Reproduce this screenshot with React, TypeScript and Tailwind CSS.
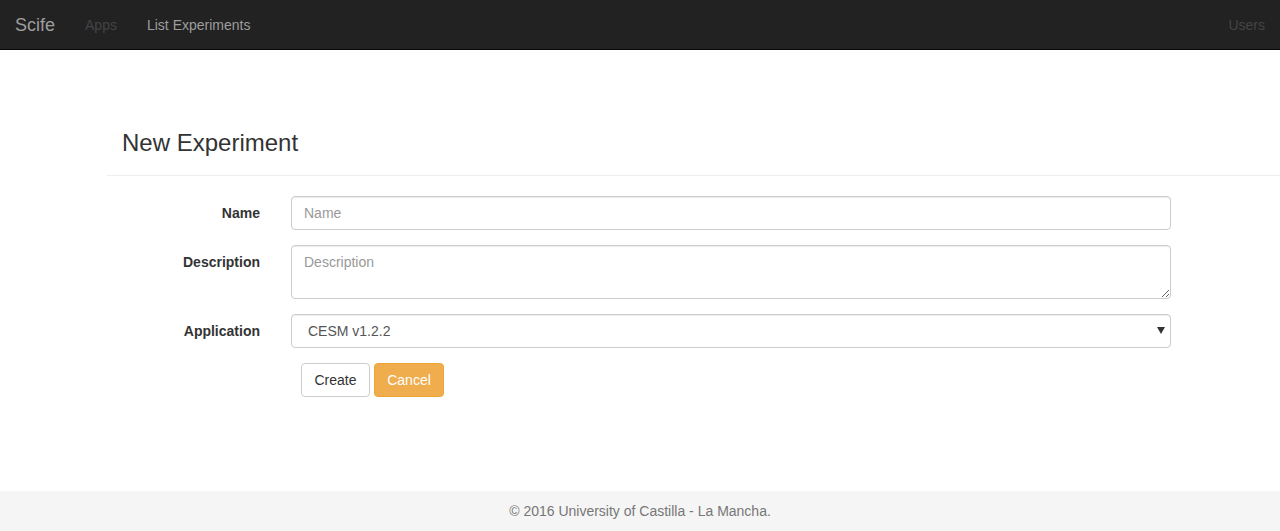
import React from 'react';

/* ── Navbar ─────────────────────────────────────────────────────────────── */

const Navbar = () => (
  <nav className="h-[50px] bg-[#222222] border-b border-[#080808] flex items-center justify-between">
    <div className="flex items-center h-full">
      <a className="px-[15px] text-[18px] leading-[20px] text-[#9d9d9d]">Scife</a>
      <a className="px-[15px] text-[#444444]">Apps</a>
      <a className="px-[15px] text-[#9d9d9d]">List Experiments</a>
    </div>
    <a className="px-[15px] text-[#444444]">Users</a>
  </nav>
);

/* ── Form row ───────────────────────────────────────────────────────────── */

const Row = ({ label, children }: { label: string; children: React.ReactNode }) => (
  <div className="flex items-start mb-[15px]">
    <label className="w-[153px] text-right font-bold pt-[7px] leading-[20px]">{label}</label>
    <div className="ml-[31px] w-[880px]">{children}</div>
  </div>
);

const field =
  'w-full border border-[#cccccc] rounded-[4px] px-3 py-[6px] text-[14px] leading-[20px] text-[#555555] placeholder:text-[#999999] shadow-[inset_0_1px_1px_rgba(0,0,0,0.075)] bg-white outline-none';

/* ── App ────────────────────────────────────────────────────────────────── */

export default function App() {
  return (
    <div
      className="min-h-screen flex flex-col bg-white text-[14px] leading-[20px] text-[#333333]"
      style={{ fontFamily: '"Liberation Sans", Arial, sans-serif' }}
    >
      <Navbar />

      <main className="pl-[107px]">
        {/* Page header */}
        <div className="mt-[80px] pb-[9px] border-b border-[#eeeeee]">
          <h3 className="pl-[15px] text-[24px] leading-[26.4px] font-medium mb-[10px]">New Experiment</h3>
        </div>

        {/* Form */}
        <form className="mt-[20px]">
          <Row label="Name">
            <input className={`${field} h-[34px]`} placeholder="Name" />
          </Row>
          <Row label="Description">
            <textarea rows={2} className={`${field} h-[54px] block`} placeholder="Description" />
          </Row>
          <Row label="Application">
            <div className="relative">
              <select className={`${field} h-[34px] appearance-none pl-4`} defaultValue="cesm">
                <option value="cesm">CESM v1.2.2</option>
              </select>
              <span className="absolute right-[6px] top-[13px] w-0 h-0 border-l-[4px] border-r-[4px] border-t-[7px] border-l-transparent border-r-transparent border-t-[#333333] pointer-events-none" />
            </div>
          </Row>
          <div className="flex gap-[4px] pl-[194px]">
            <button
              type="button"
              className="h-[34px] w-[69px] border border-[#cccccc] rounded-[4px] bg-white text-[#333333]"
            >
              Create
            </button>
            <button
              type="button"
              className="h-[34px] w-[70px] border border-[#eea236] rounded-[4px] bg-[#f0ad4e] text-white"
            >
              Cancel
            </button>
          </div>
        </form>
      </main>

      <footer className="mt-auto h-[40px] bg-[#f5f5f5] flex items-center justify-center text-[#777777]">
        © 2016 University of Castilla - La Mancha.
      </footer>
    </div>
  );
}
